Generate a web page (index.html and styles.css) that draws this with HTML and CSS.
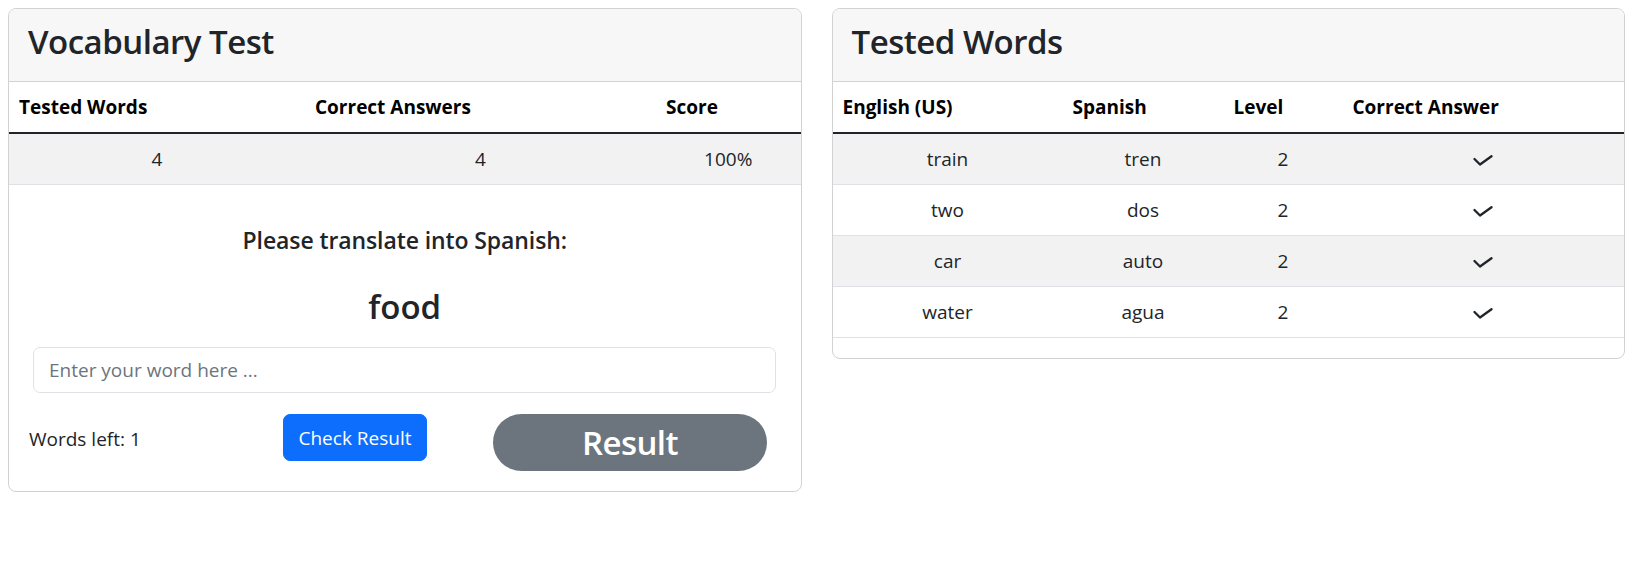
FILE: index.html
```
<!DOCTYPE html>
<html lang="en">
<head>
<meta charset="utf-8">
<title>Vocabulary Test</title>
<link rel="stylesheet" href="styles.css">
</head>
<body>
<div class="page">
  <section class="card">
    <div class="card-header"><h1 class="card-title">Vocabulary Test</h1></div>
    <table class="tbl">
      <colgroup><col class="c-tested"><col class="c-correct"><col></colgroup>
      <thead>
        <tr><th>Tested Words</th><th>Correct Answers</th><th>Score</th></tr>
      </thead>
      <tbody>
        <tr class="odd"><td>4</td><td>4</td><td>100%</td></tr>
      </tbody>
    </table>
    <div class="quiz">
      <h5 class="prompt">Please translate into Spanish:</h5>
      <h3 class="word">food</h3>
      <input class="answer" type="text" placeholder="Enter your word here ...">
      <div class="actions">
        <span class="left">Words left: 1</span>
        <button class="btn-check" type="button">Check Result</button>
        <button class="btn-result" type="button">Result</button>
      </div>
    </div>
  </section>

  <section class="card">
    <div class="card-header"><h1 class="card-title">Tested Words</h1></div>
    <table class="tbl tbl-words">
      <colgroup><col class="c-en"><col class="c-es"><col class="c-lvl"><col></colgroup>
      <thead>
        <tr><th>English (US)</th><th>Spanish</th><th>Level</th><th>Correct Answer</th></tr>
      </thead>
      <tbody>
        <tr class="odd"><td>train</td><td>tren</td><td>2</td><td><svg class="check" viewBox="0 0 20 11" width="20" height="11"><polyline points="1.5,4 7,9.5 18.5,1.2"/></svg></td></tr>
        <tr><td>two</td><td>dos</td><td>2</td><td><svg class="check" viewBox="0 0 20 11" width="20" height="11"><polyline points="1.5,4 7,9.5 18.5,1.2"/></svg></td></tr>
        <tr class="odd"><td>car</td><td>auto</td><td>2</td><td><svg class="check" viewBox="0 0 20 11" width="20" height="11"><polyline points="1.5,4 7,9.5 18.5,1.2"/></svg></td></tr>
        <tr><td>water</td><td>agua</td><td>2</td><td><svg class="check" viewBox="0 0 20 11" width="20" height="11"><polyline points="1.5,4 7,9.5 18.5,1.2"/></svg></td></tr>
      </tbody>
    </table>
  </section>
</div>
</body>
</html>
```
FILE: styles.css
```
* { box-sizing: border-box; }

body {
  margin: 8px;
  font-family: "Open Sans", "Noto Sans", sans-serif;
  font-size: 19px;
  line-height: 30px;
  color: #212529;
  background: #fff;
}

.page {
  display: flex;
  align-items: flex-start;
  gap: 30px;
}

.card {
  flex: 1 1 0;
  min-width: 0;
  border: 1px solid #d2d2d2;
  border-radius: 8px;
  overflow: hidden;
  background: #fff;
}

.card-header {
  background: #f7f7f7;
  border-bottom: 1px solid #d2d2d2;
  padding: 9px 19px 15px;
}

.card-title {
  margin: 0;
  font-size: 33px;
  font-weight: 600;
  letter-spacing: -0.5px;
  line-height: 48px;
}

.tbl {
  width: 100%;
  border-collapse: collapse;
  table-layout: fixed;
  margin-bottom: 20px;
}

.tbl th {
  text-align: left;
  font-weight: 700;
  color: #000;
  padding: 10px;
  height: 50px;
  border-bottom: 2px solid #212529;
}

.tbl td {
  text-align: center;
  padding: 10px;
  height: 51px;
  border-bottom: 1px solid #dee2e6;
}

.tbl tr.odd td { background: #f2f2f2; }

.c-tested { width: 296px; }
.c-correct { width: 351px; }

.c-en { width: 230px; }
.c-es { width: 161px; }
.c-lvl { width: 119px; }

.check {
  display: inline-block;
  vertical-align: middle;
  fill: none;
  stroke: #212529;
  stroke-width: 2.3;
  stroke-linecap: round;
  stroke-linejoin: round;
}

.quiz {
  padding: 20px 20px 20px;
  text-align: center;
}

.prompt {
  margin: 0;
  font-size: 23px;
  font-weight: 600;
  letter-spacing: -0.1px;
  line-height: 30px;
}

.word {
  margin: 31px 0 0;
  font-size: 33px;
  font-weight: 600;
  line-height: 41px;
}

.answer {
  display: block;
  width: calc(100% - 9px);
  margin: 20px 5px 0 4px;
  height: 46px;
  padding: 7px 15px;
  border: 1px solid #dee2e6;
  border-radius: 7px;
  font-family: inherit;
  font-size: 19px;
  color: #212529;
  outline: none;
}

.answer::placeholder { color: #6c757d; }

.actions {
  display: flex;
  align-items: flex-start;
  margin-top: 21px;
  text-align: left;
}

.left {
  width: 254px;
  margin-top: 10px;
}

.btn-check {
  width: 144px;
  height: 47px;
  border: 1px solid #0d6efd;
  border-radius: 7px;
  background: #0d6efd;
  color: #fff;
  font-family: inherit;
  font-size: 19px;
  line-height: 30px;
  padding: 0;
}

.btn-result {
  width: 274px;
  height: 57px;
  margin-left: 66px;
  border: none;
  border-radius: 29px;
  background: #6c757d;
  color: #fff;
  font-family: inherit;
  font-size: 33px;
  font-weight: 600;
  letter-spacing: -0.6px;
  padding: 0;
}
```
